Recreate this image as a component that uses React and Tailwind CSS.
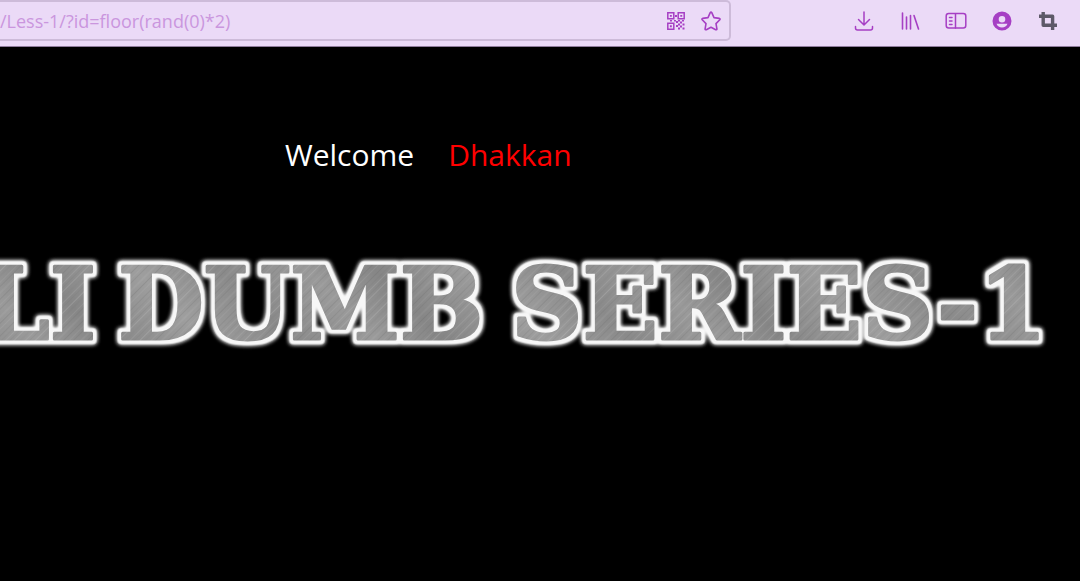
import React from "react";

const STREAKS = [
  [1, 1, 0.1], [4, 1, 0.16], [7, 1, 0.12], [10, 1, 0.2], [14, 2, 0.06], [18, 1, 0.16],
  [21, 1, 0.1], [25, 1, 0.22], [28, 2, 0.08], [33, 1, 0.12], [36, 1, 0.16], [40, 2, 0.08],
  [45, 1, 0.18], [49, 1, 0.1], [52, 1, 0.16], [57, 2, 0.08], [62, 1, 0.2], [66, 1, 0.12],
  [71, 1, 0.16],
];

function QrIcon() {
  return (
    <svg viewBox="0 0 18 18" className="size-[18px]" fill="none" stroke="currentColor" strokeWidth="1.5" aria-hidden="true">
      <path d="M.8.8h6v6h-6zM11.2.8h6v6h-6zM.8 11.2h6v6h-6z" />
      <path fill="currentColor" stroke="none" d="M2.900 2.900h1.900v1.900H2.900zM13.300 2.900h1.900v1.900h-1.900zM2.900 13.300h1.900v1.900H2.900zM8 3h2v2H8zM7 8h2v1.500H7zM3 8h2v1.500H3zM9 9h2v2H9zM11 8h2v1.500h-2zM15 8h2v1.500h-2zM13 9.500h2v2h-2zM11 11.500h2v2h-2zM15.500 11.500h2v2h-2zM9 13h2v2H9zM13 13.500h2v2h-2zM11 15.500h2v2h-2zM15.500 15.500h2v2h-2z" />
    </svg>
  );
}

function StarIcon() {
  return (
    <svg viewBox="0 0 20 20" className="size-5" fill="none" stroke="currentColor" strokeWidth="1.6" strokeLinejoin="round" aria-hidden="true">
      <path d="M9.200 1.700q.8-1.200 1.600 0L13 6.600l5.400.8q1.200.4.4 1.400L15 12.600l.9 5.300q0 1.200-1.200.8L10 16.200l-4.700 2.500q-1.200.4-1.200-.8l.9-5.300-3.800-3.800q-.8-1 .4-1.400L7 6.600z" />
    </svg>
  );
}

function DownloadIcon() {
  return (
    <svg viewBox="0 0 20 20" className="size-5" fill="none" stroke="currentColor" strokeWidth="1.5" strokeLinecap="round" strokeLinejoin="round" aria-hidden="true">
      <path d="M10 1v12.500M4.500 8.500l5.500 5.500 5.500-5.500M1.500 15.500v1.500q0 2 2 2h13q2 0 2-2v-1.500" />
    </svg>
  );
}

function LibraryIcon() {
  return (
    <svg viewBox="0 0 20 20" className="size-5" fill="none" stroke="currentColor" strokeWidth="1.6" strokeLinecap="round" aria-hidden="true">
      <path d="M2.500 2v16M6.500 6v12M10.500 4.500V18M14 4.500 18.500 18" />
    </svg>
  );
}

function SidebarIcon() {
  return (
    <svg viewBox="0 0 22 20" className="h-5 w-[22px]" fill="none" stroke="currentColor" strokeWidth="1.5" strokeLinecap="round" aria-hidden="true">
      <rect x="1.200" y="2.500" width="19.600" height="14.600" rx="2.500" />
      <path d="M10.500 3v14M4.500 6.500h2.500M4.500 10h2.500M4.500 13.500h2.500" />
    </svg>
  );
}

function AccountIcon() {
  return (
    <svg viewBox="0 0 20 20" className="size-5" aria-hidden="true">
      <path fill="currentColor" fillRule="evenodd" d="M10 .5a9.500 9.500 0 1 0 0 19 9.500 9.500 0 0 0 0-19zM10 5a3.300 3.300 0 1 1 0 6.600A3.300 3.300 0 0 1 10 5zM4.500 12.800h11q-1.500 3.800-5.500 3.800T4.500 12.800z" />
    </svg>
  );
}

function CropIcon() {
  return (
    <svg viewBox="0 0 20 20" className="size-5" fill="none" stroke="currentColor" strokeWidth="3.400" strokeLinejoin="round" aria-hidden="true">
      <path d="M5.200 1v13.300H19M1 5.200h13.600V19" />
    </svg>
  );
}

function ToolButton({ label, children, className = "text-[#a63fc4]" }) {
  return (
    <button type="button" aria-label={label} className={`flex w-[22px] items-center justify-center ${className}`}>
      {children}
    </button>
  );
}

function Banner() {
  return (
    <svg viewBox="0 0 1080 140" className="block w-full" role="img" aria-label="LI DUMB SERIES-1">
      <defs>
        <linearGradient id="metal" x1="0" y1="0" x2="1" y2="0">
          <stop offset="0" stopColor="#868686" />
          <stop offset="0.300" stopColor="#9e9e9e" />
          <stop offset="0.550" stopColor="#8a8a8a" />
          <stop offset="0.800" stopColor="#9a9a9a" />
          <stop offset="1" stopColor="#868686" />
        </linearGradient>
        <pattern id="brushed" width="240" height="74" patternUnits="userSpaceOnUse" patternTransform="rotate(-45)">
          <rect width="240" height="74" fill="url(#metal)" />
          {STREAKS.map(([y, h, opacity], i) => (
            <rect key={y} y={y} width="240" height={h} fill={i % 2 ? "#d0d0d0" : "#606060"} opacity={opacity} />
          ))}
        </pattern>
        <filter id="halo" filterUnits="userSpaceOnUse" x="-40" y="-10" width="1160" height="160" colorInterpolationFilters="sRGB">
          <feMorphology in="SourceAlpha" operator="dilate" radius="3" result="wide" />
          <feGaussianBlur in="wide" stdDeviation="1.500" result="soft" />
          <feComponentTransfer in="soft" result="edge">
            <feFuncR type="linear" slope="0" intercept="0.970" />
            <feFuncG type="linear" slope="0" intercept="0.970" />
            <feFuncB type="linear" slope="0" intercept="0.970" />
            <feFuncA type="linear" slope="2" intercept="-0.300" />
          </feComponentTransfer>
          <feGaussianBlur in="edge" stdDeviation="2" result="glow" />
          <feMerge>
            <feMergeNode in="glow" />
            <feMergeNode in="glow" />
            <feMergeNode in="edge" />
            <feMergeNode in="SourceGraphic" />
          </feMerge>
        </filter>
      </defs>
      <g
        filter="url(#halo)"
        fill="url(#brushed)"
        stroke="url(#brushed)"
        strokeWidth="3"
        strokeLinejoin="round"
        className="font-['DejaVu_Serif',serif] text-[99px] font-bold"
      >
        <text x="96" y="104" textAnchor="end">LI</text>
        <text x="118" y="104">DUMB</text>
        <text x="511" y="104">SERIES-1</text>
      </g>
    </svg>
  );
}

export default function App() {
  return (
    <div className="flex min-h-screen flex-col overflow-hidden bg-black font-['Open_Sans','Noto_Sans',sans-serif]">
      <header className="flex h-[47px] items-start justify-between border-b border-[#8f7c9c] bg-[#ebdaf7] pr-[21px]">
        <div className="flex h-[41px] w-[69%] items-center gap-4 rounded-r-[5px] border-2 border-l-0 border-[#cdbbd9] pr-2 text-[#a63fc4]">
          <input
            type="text"
            aria-label="Address"
            defaultValue="/Less-1/?id=floor(rand(0)*2)"
            className="min-w-0 flex-1 bg-transparent text-lg text-[#ca96de] outline-none"
          />
          <button type="button" aria-label="Show QR code"><QrIcon /></button>
          <button type="button" aria-label="Bookmark this page"><StarIcon /></button>
        </div>
        <nav aria-label="Browser tools" className="flex h-[41px] items-center gap-6">
          <ToolButton label="Downloads"><DownloadIcon /></ToolButton>
          <ToolButton label="Library"><LibraryIcon /></ToolButton>
          <ToolButton label="Sidebar"><SidebarIcon /></ToolButton>
          <ToolButton label="Account"><AccountIcon /></ToolButton>
          <ToolButton label="Screenshot" className="text-[#5d5968]"><CropIcon /></ToolButton>
        </nav>
      </header>
      <main className="flex flex-1 flex-col pt-[84px]">
        <p className="flex gap-[34px] pl-[285px] text-[30px] leading-[48px] text-white">
          <span>Welcome</span>
          <span className="text-[#f00]">Dhakkan</span>
        </p>
        <h1 className="mt-[56px]">
          <Banner />
        </h1>
      </main>
    </div>
  );
}
